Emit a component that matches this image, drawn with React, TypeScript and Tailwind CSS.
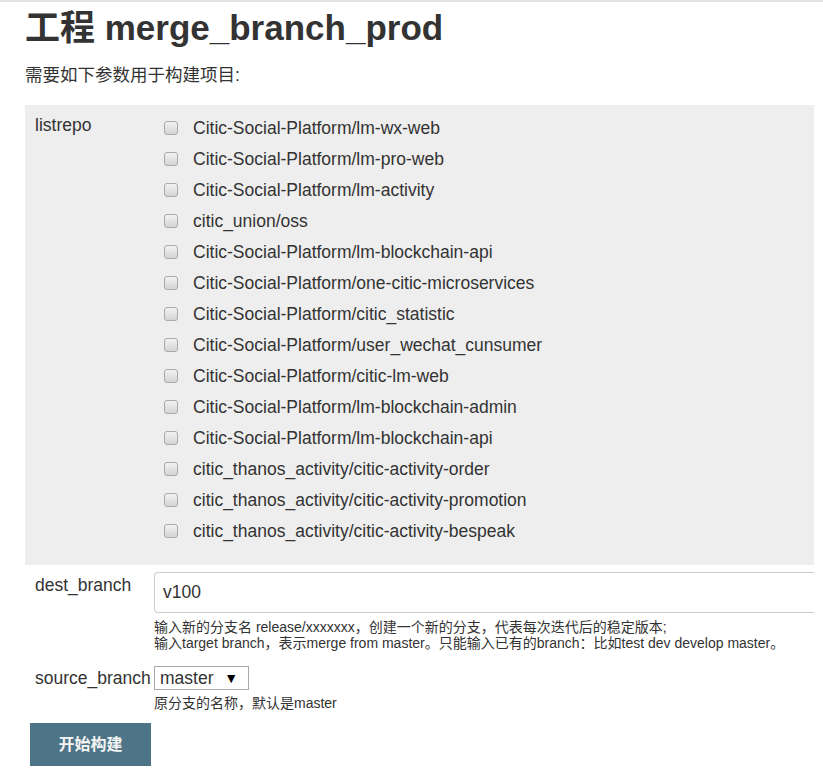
const repos = [
  "Citic-Social-Platform/lm-wx-web",
  "Citic-Social-Platform/lm-pro-web",
  "Citic-Social-Platform/lm-activity",
  "citic_union/oss",
  "Citic-Social-Platform/lm-blockchain-api",
  "Citic-Social-Platform/one-citic-microservices",
  "Citic-Social-Platform/citic_statistic",
  "Citic-Social-Platform/user_wechat_cunsumer",
  "Citic-Social-Platform/citic-lm-web",
  "Citic-Social-Platform/lm-blockchain-admin",
  "Citic-Social-Platform/lm-blockchain-api",
  "citic_thanos_activity/citic-activity-order",
  "citic_thanos_activity/citic-activity-promotion",
  "citic_thanos_activity/citic-activity-bespeak",
];

const font = "font-['Liberation_Sans','Noto_Sans_CJK_SC',sans-serif]";

const App = () => {
  return (
    <div className={`${font} min-h-[781px] w-[823px] border-t-2 border-[#e4e4e4] bg-white text-[#333]`}>
      <div className="w-[814px] pl-[25px]">
        {/* Title */}
        <h1 className="mt-[6px] text-[35px] font-bold leading-[40px] text-[#333]">
          工程 merge_branch_prod
        </h1>
        <p className="mt-[17px] text-[17.5px] leading-[20px]">需要如下参数用于构建项目:</p>

        {/* listrepo */}
        <div className="mt-[20px] flex bg-[#eeeeee] pl-[10px] pt-[7px] pb-[19px]">
          <div className="w-[128px] pt-[1px] text-[17.5px] leading-[24px]">listrepo</div>
          <div className="flex flex-col">
            {repos.map((r, i) => (
              <label key={i} className="flex h-[31px] items-center">
                <span className="ml-[1px] mr-[15px] h-[14px] w-[14px] rounded-[3px] border border-[#aaa] bg-gradient-to-b from-[#f2f2f2] to-[#d4d4d4]" />
                <span className="text-[17.5px] leading-[24px]">{r}</span>
              </label>
            ))}
          </div>
        </div>

        {/* dest_branch */}
        <div className="mt-[7px] flex">
          <div className="w-[129px] pl-[10px] pt-[1px] text-[17.5px] leading-[24px]">dest_branch</div>
          <div className="flex-1">
            <div className="flex h-[41px] items-center rounded-l-[4px] border border-r-0 border-[#ccc] pl-[8px] text-[17.5px]">
              v100
            </div>
            <div className="mt-[6px] text-[14px] leading-[16px]">
              <p>输入新的分支名 release/xxxxxxx，创建一个新的分支，代表每次迭代后的稳定版本;</p>
              <p>输入target branch，表示merge from master。只能输入已有的branch：比如test dev develop master。</p>
            </div>
          </div>
        </div>

        {/* source_branch */}
        <div className="mt-[15px] flex">
          <div className="w-[129px] pl-[10px] text-[17.5px] leading-[24px]">source_branch</div>
          <div>
            <div className="flex h-[24px] w-[95px] items-center justify-between border border-[#a9a9a9] pl-[5px] pr-[10px] text-[17.5px]">
              <span>master</span>
              <span className="text-[14px] text-black">▼</span>
            </div>
            <p className="mt-[5px] text-[14px] leading-[16px]">原分支的名称，默认是master</p>
          </div>
        </div>

        {/* Build button */}
        <button className="ml-[5px] mt-[12px] flex h-[43px] w-[121px] items-center justify-center bg-[#4d7487] text-[16px] font-bold text-[#f4f4f4]">
          开始构建
        </button>
      </div>
    </div>
  );
};

export default App;
